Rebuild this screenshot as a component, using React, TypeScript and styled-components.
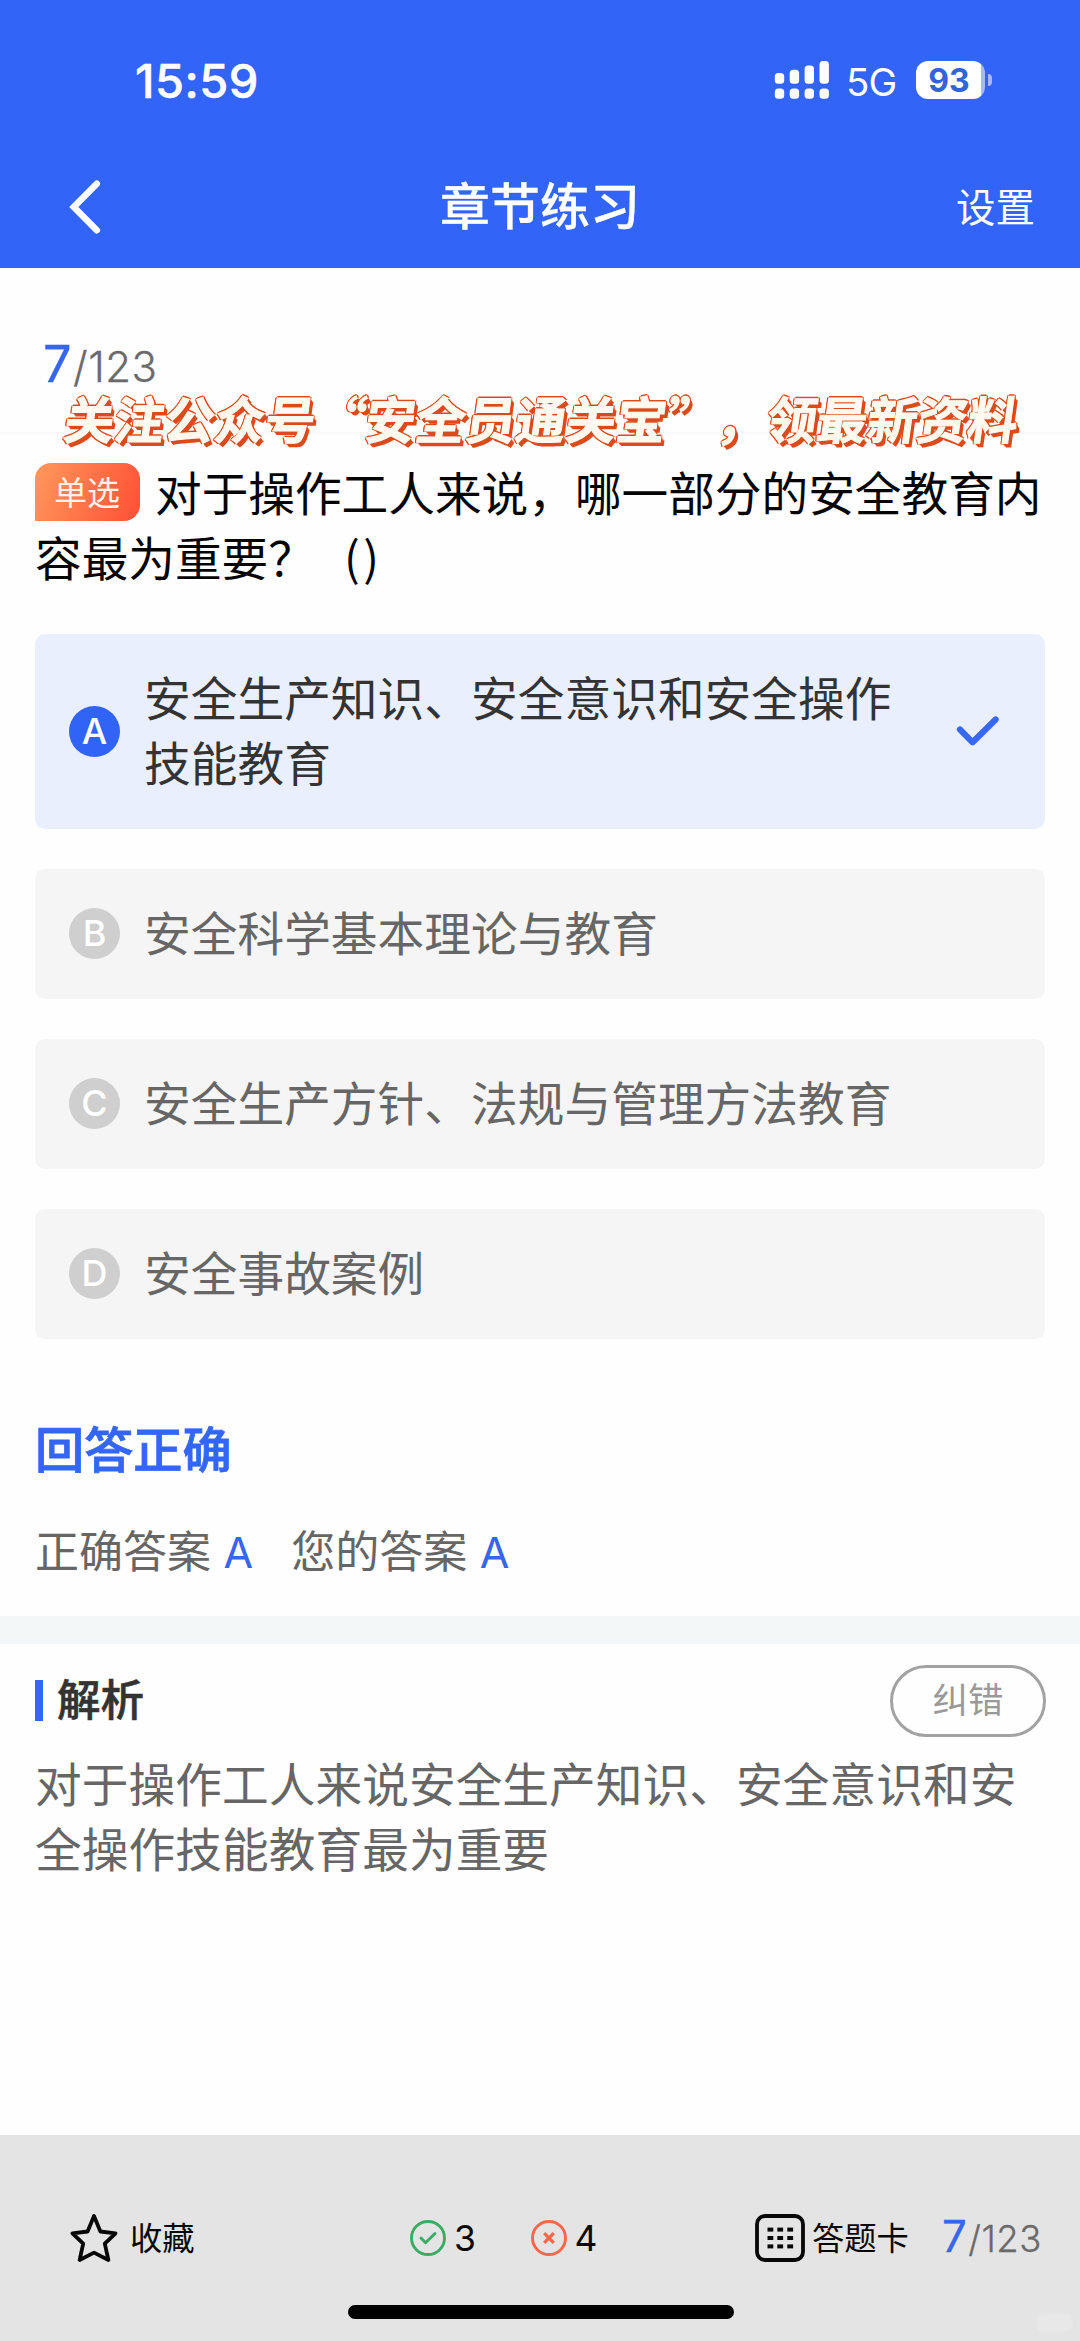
import React from "react";
import styled, { createGlobalStyle, css } from "styled-components";

const cjk = `"Noto Sans CJK SC", sans-serif`;
const latin = `Inter, "Noto Sans CJK SC", sans-serif`;
const blue = "#3366f6";

const GlobalStyle = createGlobalStyle`
  * { box-sizing: border-box; }
  body { margin: 0; background: #fefefe; font-family: ${cjk}; }
`;

const Page = styled.div`
  display: flex;
  flex-direction: column;
  width: 1080px;
  height: 2341px;
  overflow: hidden;
  background: #fefefe;
`;

const Header = styled.header`
  height: 268px;
  background: #3164f7;
  color: #fff;
`;

const StatusBar = styled.div`
  display: flex;
  align-items: center;
  height: 160px;
  padding: 0 88px 0 135px;
  font-family: ${latin};
`;

const Clock = styled.time`
  flex: 1;
  font-size: 47px;
  font-weight: 500;
  letter-spacing: 0.5px;
  -webkit-text-stroke: 0.5px currentColor;
`;

const Network = styled.span`
  margin: 3px 17px 0 17px;
  width: 53px;
  font-size: 38.5px;
  letter-spacing: -1px;
`;

const Battery = styled.div`
  display: flex;
  align-items: center;
  gap: 3px;
`;

const BatteryBody = styled.div`
  display: flex;
  align-items: center;
  justify-content: center;
  width: 69px;
  height: 38px;
  padding-right: 3px;
  border-radius: 12px;
  background: linear-gradient(90deg, #fff 65px, #a3bafb 65px);
  color: #3164d8;
  font-size: 32px;
  font-weight: 700;
`;

const BatteryCap = styled.div`
  width: 4px;
  height: 12px;
  border-radius: 0 4px 4px 0;
  background: #a3bafb;
`;

const NavBar = styled.nav`
  display: grid;
  grid-template-columns: 1fr auto 1fr;
  align-items: center;
  height: 94px;
  padding: 0 45px 0 68px;
`;

const NavTitle = styled.h1`
  margin: 0 0 0 -23px;
  padding-bottom: 8px;
  font-size: 50px;
  font-weight: 500;
  line-height: 60px;
  -webkit-text-stroke: 0.3px currentColor;
`;

const NavAction = styled.span`
  justify-self: end;
  font-size: 39.5px;
  line-height: 48px;
  padding-bottom: 4px;
`;

const Intro = styled.div`
  position: relative;
  height: 166px;
  padding: 68px 0 0 43px;
  border-bottom: 2px solid #f9f9f9;
`;

const Counter = styled.div<{ $size: number }>`
  display: flex;
  align-items: baseline;
  color: #6a6a6a;
  font-family: ${latin};
  font-size: ${(p) => p.$size}px;
  font-weight: 300;
  letter-spacing: 0.5px;
  line-height: 56px;
  -webkit-text-stroke: 0.3px currentColor;

  strong {
    color: #3766ea;
    font-size: 1.2em;
    font-weight: 400;
    margin-right: 1px;
  }
`;

const Promo = styled.div`
  position: absolute;
  left: 65px;
  top: 125px;
  color: #fffaf0;
  font-size: 50.2px;
  font-weight: 700;
  line-height: 48px;
  text-spacing-trim: space-all;
  font-kerning: none;
  white-space: nowrap;
  transform: skewX(-8deg);
  -webkit-text-stroke: 1px #fffaf0;
  text-shadow: -1.4px -1.4px 0 #dd4a1c, 0 -1.6px 0 #dd4a1c, -1.6px 0 0 #dd4a1c,
    1.4px -1.4px 0 #dd4a1c, -1.4px 1.4px 0 #dd4a1c, 1.4px 1.4px 0 #dd4a1c,
    2px 2px 0 #dd4a1c, 3px 3px 0 #dd4a1c, 4px 4px 0 #dd4a1c;
`;

const bodyText = css`
  font-size: 46.67px;
  font-weight: 400;
  line-height: 65.2px;
`;

const Question = styled.p`
  ${bodyText}
  margin: 23.5px 35px 0;
  color: #050505;
  white-space: nowrap;
`;

const Tag = styled.span`
  display: inline-flex;
  align-items: center;
  justify-content: center;
  width: 105px;
  height: 58px;
  margin: 5.5px 15px 0 0;
  padding: 0 1px 3px 0;
  border-radius: 16px 16px 16px 0;
  background: linear-gradient(110deg, #ff985c, #ff4f35);
  color: #fff1ea;
  font-size: 33px;
  line-height: 40px;
  vertical-align: top;
`;

const Blank = styled.span`
  margin-left: 29px;
  letter-spacing: 3.5px;
`;

const Options = styled.ul`
  display: flex;
  flex-direction: column;
  gap: 39.6px;
  margin: 45.6px 35px 0;
  padding: 0;
  list-style: none;
`;

const Option = styled.li<{ $selected?: boolean }>`
  ${bodyText}
  display: flex;
  align-items: center;
  min-height: 130.5px;
  padding: 29px 44px 29px 34px;
  border-radius: 10px;
  background: ${(p) => (p.$selected ? "#eaeffe" : "#f5f5f5")};
  color: ${(p) => (p.$selected ? "#333" : "#666")};
`;

const Letter = styled.span<{ $selected?: boolean }>`
  display: flex;
  flex: none;
  align-items: center;
  justify-content: center;
  width: 51px;
  height: 51px;
  margin-right: 24px;
  border-radius: 50%;
  background: ${(p) => (p.$selected ? "#3163f6" : "#d0cfcf")};
  color: #fff;
  font-family: ${latin};
  font-size: 36px;
  font-weight: 500;
`;

const OptionText = styled.span`
  flex: 1;
  padding: 0 54px 7px 0;
  letter-spacing: 0.06px;
`;

const Result = styled.section`
  padding: 72px 35px 0;
  height: 277px;
`;

const Verdict = styled.h2`
  margin: 0;
  color: ${blue};
  font-size: 49.2px;
  font-weight: 500;
  line-height: 72px;
  -webkit-text-stroke: 0.8px currentColor;
`;

const Answers = styled.div`
  display: flex;
  gap: 38px;
  margin-top: 34px;
  color: #666;
  font-size: 44px;
  line-height: 64px;
`;

const Answer = styled.span`
  display: flex;
  gap: 12.5px;

  b {
    margin-top: 3px;
    color: #3766ea;
    font-family: ${latin};
    font-size: 43px;
    font-weight: 400;
  }
`;

const Divider = styled.div`
  height: 28px;
  background: #f3f7f8;
`;

const Analysis = styled.section`
  padding: 20px 34px 0 35px;
`;

const AnalysisHead = styled.div`
  display: flex;
  align-items: center;
  justify-content: space-between;
  height: 73px;
`;

const AnalysisTitle = styled.h3`
  display: flex;
  align-items: center;
  gap: 14px;
  margin: 0;
  color: #333;
  font-size: 43.5px;
  font-weight: 500;
  line-height: 60px;
  -webkit-text-stroke: 0.6px currentColor;

  &::before {
    content: "";
    width: 8px;
    height: 41px;
    background: ${blue};
  }

  span {
    padding-bottom: 6px;
  }
`;

const Report = styled.button`
  width: 156px;
  height: 72px;
  padding: 0 0 6px;
  border: 3px solid #a2a2a2;
  border-radius: 36px;
  background: none;
  color: #999;
  font-family: ${cjk};
  font-size: 35.5px;
`;

const AnalysisText = styled.p`
  ${bodyText}
  margin: 11.5px 0 0;
  color: #666;
  width: 1000px;
  letter-spacing: 0.08px;
`;

const Footer = styled.footer`
  position: relative;
  display: flex;
  flex-direction: column;
  align-items: center;
  height: 206px;
  margin-top: auto;
  background: #e4e4e4;
  color: #080808;
`;

const Toolbar = styled.div`
  display: flex;
  align-items: center;
  width: 100%;
  height: 170px;
  padding: 36px 0 0 70px;
  font-size: 32.3px;
`;

const Tool = styled.div<{ $width: number; $gap: number }>`
  display: flex;
  flex: none;
  align-items: center;
  gap: ${(p) => p.$gap}px;
  width: ${(p) => p.$width}px;
  height: 52px;
`;

const ToolLabel = styled.span`
  padding-bottom: 4px;
`;

const Tally = styled.span`
  font-family: ${latin};
  font-size: 35.5px;
`;

const HomeIndicator = styled.div`
  width: 386px;
  height: 14px;
  margin-left: 1px;
  border-radius: 7px;
  background: #000;
`;

const CornerMark = styled.div`
  position: absolute;
  right: 8px;
  bottom: 9px;
  width: 35px;
  height: 18px;
  border-radius: 6px;
  background: #e8e8e8;
  filter: blur(1.5px);
`;

const options = [
  { id: "A", text: "安全生产知识、安全意识和安全操作技能教育", selected: true },
  { id: "B", text: "安全科学基本理论与教育" },
  { id: "C", text: "安全生产方针、法规与管理方法教育" },
  { id: "D", text: "安全事故案例" },
];

const SignalIcon = () => (
  <svg width="55" height="38" viewBox="0 0 55 38" fill="#fff">
    {[12, 8.7, 4.4, 0].map((top, i) => (
      <g key={i}>
        <rect x={0.8 + i * 14.9} y={top} width="9.4" height={22.8 - top} rx="3.5" />
        <rect x={0.8 + i * 14.9} y="27.6" width="9.4" height="10.2" rx="3.5" />
      </g>
    ))}
  </svg>
);

const BackIcon = () => (
  <svg width="34" height="56" viewBox="0 0 34 56" fill="none" stroke="#fff" strokeWidth="6.6" strokeLinecap="round">
    <path d="M28.8 4.8 5.8 28 28.8 51.2" />
  </svg>
);

const CheckIcon = () => (
  <svg width="46" height="32" viewBox="0 0 46 32" fill="none" stroke="#3768f0" strokeWidth="6.2" strokeLinecap="round" strokeLinejoin="round">
    <path d="M5 14.5 17.6 27.3 40.6 4.5" />
  </svg>
);

const StarIcon = () => (
  <svg width="48" height="50" viewBox="0 0 48 50" fill="none" stroke="#080808" strokeWidth="3.8" strokeLinejoin="round">
    <path d="M24 3 30.4 18.5 45.5 20.3 34.8 30.7 38.4 47 24 39.6 9.6 47 13.2 30.7 2.5 20.3 17.6 18.5Z" />
  </svg>
);

const RightIcon = () => (
  <svg width="38" height="38" viewBox="0 0 38 38" fill="none" stroke="#3aac64" strokeWidth="2.9" strokeLinecap="round">
    <circle cx="19" cy="19" r="16.5" />
    <path d="M12 19 16.6 23.8 26 14.5" strokeLinejoin="round" />
  </svg>
);

const WrongIcon = () => (
  <svg width="38" height="38" viewBox="0 0 38 38" fill="none" stroke="#f5684a" strokeWidth="2.9">
    <circle cx="19" cy="19" r="16.5" />
    <path d="M14.2 14.2 23.8 23.8M23.8 14.2 14.2 23.8" strokeWidth="3.2" />
  </svg>
);

const CardIcon = () => (
  <svg width="50" height="48" viewBox="0 0 50 48" fill="none">
    <rect x="2" y="2" width="46" height="44" rx="8" stroke="#080808" strokeWidth="3.8" />
    {[15.6, 24, 32.4].map((y) =>
      [15.4, 25.2, 35.2].map((x) => (
        <rect key={`${x}-${y}`} x={x - 2.9} y={y - 2} width="5.8" height="4" fill="#080808" />
      ))
    )}
  </svg>
);

export default function App() {
  return (
    <Page lang="zh-CN">
      <GlobalStyle />
      <Header>
        <StatusBar>
          <Clock>15:59</Clock>
          <SignalIcon />
          <Network>5G</Network>
          <Battery>
            <BatteryBody>93</BatteryBody>
            <BatteryCap />
          </Battery>
        </StatusBar>
        <NavBar>
          <BackIcon />
          <NavTitle>章节练习</NavTitle>
          <NavAction>设置</NavAction>
        </NavBar>
      </Header>

      <Intro>
        <Counter $size={42}>
          <strong>7</strong>/123
        </Counter>
        <Promo>关注公众号“安全员通关宝”，领最新资料</Promo>
      </Intro>

      <Question>
        <Tag>单选</Tag>对于操作工人来说，哪一部分的安全教育内
        <br />
        容最为重要？<Blank>()</Blank>
      </Question>

      <Options>
        {options.map((o) => (
          <Option key={o.id} $selected={o.selected}>
            <Letter $selected={o.selected}>{o.id}</Letter>
            <OptionText>{o.text}</OptionText>
            {o.selected && <CheckIcon />}
          </Option>
        ))}
      </Options>

      <Result>
        <Verdict>回答正确</Verdict>
        <Answers>
          <Answer>正确答案 <b>A</b></Answer>
          <Answer>您的答案 <b>A</b></Answer>
        </Answers>
      </Result>

      <Divider />

      <Analysis>
        <AnalysisHead>
          <AnalysisTitle>
            <span>解析</span>
          </AnalysisTitle>
          <Report>纠错</Report>
        </AnalysisHead>
        <AnalysisText>对于操作工人来说安全生产知识、安全意识和安全操作技能教育最为重要</AnalysisText>
      </Analysis>

      <Footer>
        <Toolbar>
          <Tool $width={339} $gap={12}>
            <StarIcon />
            <ToolLabel>收藏</ToolLabel>
          </Tool>
          <Tool $width={121} $gap={7}>
            <RightIcon />
            <Tally>3</Tally>
          </Tool>
          <Tool $width={225} $gap={6.5}>
            <WrongIcon />
            <Tally>4</Tally>
          </Tool>
          <Tool $width={187} $gap={7}>
            <CardIcon />
            <ToolLabel>答题卡</ToolLabel>
          </Tool>
          <Counter $size={36.5}>
            <strong>7</strong>/123
          </Counter>
        </Toolbar>
        <HomeIndicator />
        <CornerMark />
      </Footer>
    </Page>
  );
}
